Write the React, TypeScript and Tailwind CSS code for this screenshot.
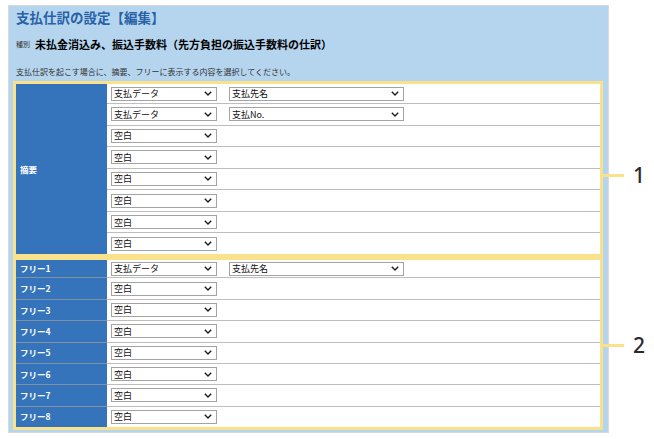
import React from 'react';

const jp = { fontFamily: '"Noto Sans CJK JP", "Noto Sans", sans-serif' };

function Sel({ label, w }: { label: string; w: string }) {
  return (
    <div className={`flex h-[14px] items-center justify-between border border-[#a3a3a3] bg-white pl-[2px] pr-[4px] ${w}`}>
      <span className="text-[9px] leading-none text-[#111]">{label}</span>
      <svg width="8" height="5" viewBox="0 0 8 5">
        <path d="M0.8 0.8 L4 4 L7.2 0.8" stroke="#1d1d1d" strokeWidth="1.4" fill="none" />
      </svg>
    </div>
  );
}

function Callout({ num, top }: { num: string; top: string }) {
  return (
    <div className={`absolute right-[-45px] flex items-center ${top}`}>
      <div className="h-[3px] w-[24px] bg-[#fae18b]" />
      <span
        className="ml-[9px] text-[21px] font-medium leading-none text-[#2b2b2b]"
        style={{ fontFamily: '"Noto Sans", sans-serif' }}
      >
        {num}
      </span>
    </div>
  );
}

const summaryRows = [
  ['支払データ', '支払先名'],
  ['支払データ', '支払No.'],
  ['空白'],
  ['空白'],
  ['空白'],
  ['空白'],
  ['空白'],
  ['空白'],
];

const freeRows = [
  ['フリー1', '支払データ', '支払先名'],
  ['フリー2', '空白'],
  ['フリー3', '空白'],
  ['フリー4', '空白'],
  ['フリー5', '空白'],
  ['フリー6', '空白'],
  ['フリー7', '空白'],
  ['フリー8', '空白'],
];

export default function App() {
  return (
    <div className="h-[439px] w-[654px] bg-white pl-[8px] pt-[5px]" style={jp}>
      <div className="w-[601px] border border-[#d9d9d9] bg-[#b5d5ef] pb-[2px] pl-[4px] pr-[5px]">
        {/* title */}
        <div className="flex h-[22px] items-center pl-[3px] text-[13.5px] font-bold text-[#2861a6]">
          支払仕訳の設定【編集】
        </div>

        <div className="mt-[8px] flex h-[16px] items-center pl-[3px]">
          <span className="text-[7px] text-[#333]">種別</span>
          <span className="ml-[5px] text-[11px] font-bold text-black">
            未払金消込み、振込手数料（先方負担の振込手数料の仕訳）
          </span>
        </div>

        <div className="mt-[13px] flex h-[14px] items-center pl-[3px] text-[8px] text-[#333]">
          支払仕訳を起こす場合に、摘要、フリーに表示する内容を選択してください。
        </div>

        {/* 摘要 */}
        <div className="relative mt-[2px] flex border-[3px] border-[#fae18b]">
          <div className="flex w-[91px] items-center bg-[#3574bb] pl-[4px] text-[8.5px] font-bold text-white">
            摘要
          </div>
          <div className="flex flex-1 flex-col bg-white">
            {summaryRows.map((r, i) => (
              <div
                key={i}
                className={
                  i === 0
                    ? 'flex h-[19px] items-center gap-[12px] pl-[4px]'
                    : 'flex h-[21.57px] items-center gap-[12px] border-t border-[#bdbdbd] pl-[4px]'
                }
              >
                <Sel label={r[0]} w="w-[106px]" />
                {r[1] && <Sel label={r[1]} w="w-[175px]" />}
              </div>
            ))}
          </div>
          <Callout num="1" top="top-[81px]" />
        </div>

        {/* フリー */}
        <div className="relative flex flex-col border-[3px] border-[#fae18b]">
          {freeRows.map((r, i) => (
            <div key={i} className={i === 0 ? 'flex h-[17.5px]' : 'flex h-[21.36px]'}>
              <div
                className={
                  i === 0
                    ? 'flex w-[91px] items-center bg-[#3574bb] pl-[4px] text-[8.5px] font-bold text-white'
                    : 'flex w-[91px] items-center border-t border-[#8192a7] bg-[#3574bb] pl-[4px] text-[8.5px] font-bold text-white'
                }
              >
                {r[0]}
              </div>
              <div
                className={
                  i === 0
                    ? 'flex flex-1 items-center gap-[12px] bg-white pl-[4px]'
                    : 'flex flex-1 items-center gap-[12px] border-t border-[#bdbdbd] bg-white pl-[4px]'
                }
              >
                <Sel label={r[1]} w="w-[106px]" />
                {r[2] && <Sel label={r[2]} w="w-[175px]" />}
              </div>
            </div>
          ))}
          <Callout num="2" top="top-[75px]" />
        </div>
      </div>
    </div>
  );
}
